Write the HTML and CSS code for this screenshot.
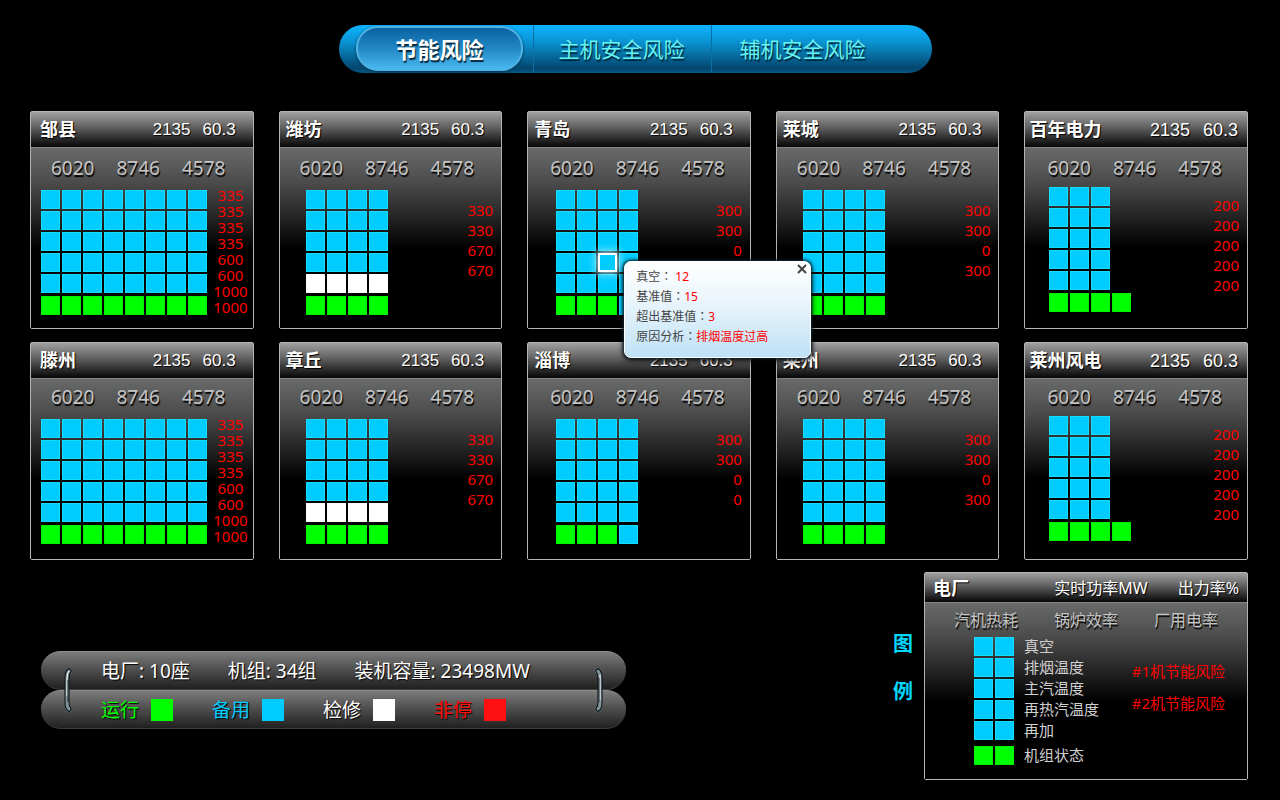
FILE: index.html
```html
<!DOCTYPE html>
<html lang="zh-CN">
<head>
    <meta charset="UTF-8">
    <meta name="viewport" content="width=device-width, initial-scale=1.0">
    <title>节能风险</title>
    <link rel="stylesheet" href="styles.css">
</head>
<body>
    <!-- 顶部切换 -->
    <nav class="tab-bar">
        <div class="tabs">
            <div class="tab-slot"><button type="button" class="tab active">节能风险</button></div>
            <div class="tab-slot"><button type="button" class="tab">主机安全风险</button></div>
            <div class="tab-slot last"><button type="button" class="tab">辅机安全风险</button></div>
        </div>
    </nav>

    <!-- 各电厂卡片，由 plants.js 生成 -->
    <main class="plants" id="plants"></main>

    <div class="bottom">
        <!-- 汇总和状态颜色 -->
        <section class="summary">
            <div class="bar">
                <span>电厂: 10座</span>
                <span>机组: 34组</span>
                <span>装机容量: 23498MW</span>
            </div>
            <div class="bar states">
                <span class="state run">运行<i class="swatch"></i></span>
                <span class="state standby">备用<i class="swatch"></i></span>
                <span class="state repair">检修<i class="swatch"></i></span>
                <span class="state outage">非停<i class="swatch"></i></span>
            </div>
            <svg class="clip clip-left" viewBox="0 0 14 48" width="14" height="48">
                <circle cx="8" cy="5" r="3" fill="#111" stroke="#56666a"/>
                <circle cx="8" cy="43" r="3" fill="#111" stroke="#56666a"/>
                <path d="M8 5Q6 7 6 12V36Q6 41 8 43" fill="none" stroke="#0b1113" stroke-width="5" stroke-linecap="round"/>
                <path d="M8 5Q6 7 6 12V36Q6 41 8 43" fill="none" stroke="#7e9298" stroke-width="3" stroke-linecap="round"/>
                <path d="M8 5Q6 7 6 12V30" fill="none" stroke="#fff" stroke-width="1" stroke-linecap="round"/>
                <path d="M7 14V36" fill="none" stroke="#20282b" stroke-width="1"/>
            </svg>
            <svg class="clip clip-right" viewBox="0 0 14 48" width="14" height="48">
                <circle cx="6" cy="5" r="3" fill="#111" stroke="#56666a"/>
                <circle cx="6" cy="43" r="3" fill="#111" stroke="#56666a"/>
                <path d="M6 5Q8 7 8 12V36Q8 41 6 43" fill="none" stroke="#0b1113" stroke-width="5" stroke-linecap="round"/>
                <path d="M6 5Q8 7 8 12V36Q8 41 6 43" fill="none" stroke="#7e9298" stroke-width="3" stroke-linecap="round"/>
                <path d="M8 9V34" fill="none" stroke="#fff" stroke-width="1" stroke-linecap="round"/>
                <path d="M7 12V36" fill="none" stroke="#20282b" stroke-width="1"/>
            </svg>
        </section>

        <!-- 图例 -->
        <section class="legend">
            <h2 class="legend-title"><span>图</span><span>例</span></h2>
            <div class="card legend-card">
                <div class="card-head">
                    <h3 class="name">电厂</h3>
                    <span class="power">实时功率MW</span>
                    <span>出力率%</span>
                </div>
                <div class="card-body">
                    <div class="rates">
                        <span>汽机热耗</span>
                        <span>锅炉效率</span>
                        <span>厂用电率</span>
                    </div>
                    <div class="legend-main">
                        <ul class="legend-list">
                            <li><i class="cell"></i><i class="cell"></i>真空</li>
                            <li><i class="cell"></i><i class="cell"></i>排烟温度</li>
                            <li><i class="cell"></i><i class="cell"></i>主汽温度</li>
                            <li><i class="cell"></i><i class="cell"></i>再热汽温度</li>
                            <li><i class="cell"></i><i class="cell"></i>再加</li>
                            <li class="unit"><i class="cell green"></i><i class="cell green"></i>机组状态</li>
                        </ul>
                        <div class="legend-risk">
                            <span>#1机节能风险</span>
                            <span>#2机节能风险</span>
                        </div>
                    </div>
                </div>
            </div>
        </section>
    </div>

    <script src="plants.js"></script>
</body>
</html>
```

FILE: styles.css
```css
* {
    box-sizing: border-box;
}

body {
    margin: 0;
    padding: 25px 32px 20px 30px;
    background-color: #000;
    color: #fff;
    font-family: "Noto Sans", "Noto Sans CJK SC", sans-serif;
}

h2, h3, ul, p {
    margin: 0;
    padding: 0;
}

button {
    font-family: inherit;
    border: none;
    padding: 0;
    background: none;
    cursor: pointer;
}

/* 顶部切换 */
.tab-bar {
    display: flex;
    justify-content: center;
    padding-right: 7px;
    margin-bottom: 38px;
}

.tabs {
    display: flex;
    height: 48px;
    border-radius: 24px;
    background: linear-gradient(#0db4ff, #0a93d3 35%, #04476e 90%, #075a8a);
}

.tab-slot {
    display: flex;
    padding: 1px 10px 2px 17px;
    border-right: 1px solid #0b6fa5;
}

.tab-slot + .tab-slot {
    padding: 1px 26px 2px 25px;
}

.tab-slot.last {
    padding: 1px 66px 2px 28px;
    border-right: none;
}

.tab {
    color: #66f3f0;
    font-size: 21px;
    line-height: 24px;
    text-shadow: 1px 2px 1px #00263c;
}

.tab.active {
    padding: 0 37px;
    border-radius: 22px;
    border: 2px solid #4fb2e4;
    background: linear-gradient(#0b62a3, #2287c4 50%, #48b8f0);
    color: #fff;
    font-size: 22px;
    font-weight: 700;
    box-shadow: 0 1px 3px #00304e;
}

/* 电厂卡片 */
.plants {
    display: grid;
    grid-template-columns: repeat(5, 1fr);
    gap: 13px 25px;
}

.card {
    border: 1px solid #b4b4b4;
    border-radius: 2px;
}

.card-head {
    display: flex;
    align-items: center;
    gap: 12px;
    height: 35px;
    padding: 0 17px 0 6px;
    background: linear-gradient(#a0a0a0, #666 40%, #060606);
    font-family: "Liberation Sans", "Noto Sans CJK SC", sans-serif;
    font-size: 17px;
    line-height: 24px;
    text-shadow: 1px 1px 1px #000;
}

.name {
    margin-right: auto;
    font-size: 18px;
    font-weight: 700;
}

.card-body {
    border-top: 1px solid #858585;
    padding: 8px 8px 12px 26px;
    background: linear-gradient(#686a69, #4a4a4a 20%, #000 56%);
}

.rates {
    display: flex;
    gap: 22px;
    margin-left: -6px;
    margin-bottom: 10px;
    color: #c4c4c4;
    font-size: 19px;
    line-height: 24px;
    text-shadow: 1px 2px 1px #000;
}

.chart {
    display: flex;
    justify-content: space-between;
}

.row {
    display: flex;
    gap: 2px;
    margin-bottom: 2px;
}

.row.status {
    margin-top: 3px;
    margin-bottom: 1px;
}

.cell {
    display: block;
    width: 19px;
    height: 19px;
    background-color: #00ccff;
    border: 1px solid #12dcff;
}

.cell.green {
    background-color: #00ff00;
    border-color: #00f000;
}

.cell.white {
    background-color: #fff;
    border-color: #fff;
}

.cell-wrap {
    position: relative;
}

.cell.selected {
    border: 2px solid #fff;
    box-shadow: 0 0 8px 2px #9eeaff;
}

.outputs {
    margin-top: 10px;
    color: #ff0000;
    font-size: 15px;
    line-height: 20px;
    text-align: right;
}

/* 第三列稍微靠右 */
.plants .card:nth-child(5n+3) .card-body {
    padding-left: 28px;
}

/* 八台机组的电厂 */
.wide .card-head {
    padding-left: 9px;
}

.wide .card-body {
    padding-left: 10px;
    padding-right: 5px;
}

.wide .rates {
    margin-left: 10px;
}

.wide .outputs {
    margin-top: -3px;
    line-height: 16px;
    text-align: center;
}

/* 名称较长的电厂 */
.long .card-head {
    gap: 13px;
    padding: 0 9px 0 4px;
    font-size: 18px;
}

.long .card-body {
    padding-left: 24px;
}

.long .rates {
    margin-left: -2px;
    margin-bottom: 7px;
}

.long .outputs {
    margin-top: 8px;
}

/* 第二排内容更紧凑 */
.plants .card:nth-child(n+6) .card-body {
    padding-top: 6px;
    padding-bottom: 14px;
}

/* 风险提示框 */
.popup {
    position: absolute;
    z-index: 10;
    top: 8px;
    left: 26px;
    width: 187px;
    padding: 5px 11px 10px;
    border: 1px solid #fff;
    border-radius: 7px;
    background: linear-gradient(#fff, #eef7fc 35%, #bfe1f6);
    box-shadow: 0 0 3px 1px #10242e, 0 2px 6px #000;
    color: #444;
    font-size: 12px;
    line-height: 20px;
}

.popup p {
    height: 20px;
}

.popup b {
    color: #ff0000;
    font-weight: normal;
}

/* 冒号居中显示 */
.colon {
    font-family: "Noto Sans CJK TC", sans-serif;
    line-height: 12px;
}

.popup-close {
    position: absolute;
    top: 1px;
    right: 2px;
    width: 12px;
    height: 12px;
}

.popup-close svg {
    display: block;
    margin: 1px;
}

/* 底部 */
.bottom {
    display: flex;
    justify-content: space-between;
    align-items: flex-start;
    margin-top: 12px;
}

.summary {
    position: relative;
    width: 48%;
    margin: 79px 0 0 11px;
}

.bar {
    display: flex;
    align-items: center;
    gap: 38px;
    height: 39px;
    padding-left: 60px;
    border-radius: 20px;
    border-top: 1px solid #8a8a8a;
    border-bottom: 1px solid #3c3c3c;
    background: linear-gradient(#7c7c7c, #555 40%, #202020);
    font-size: 19px;
    line-height: 24px;
    white-space: nowrap;
    text-shadow: 1px 1px 1px #000;
}

.states {
    gap: 39px;
}

.state {
    display: flex;
    align-items: center;
    gap: 12px;
}

.swatch {
    width: 22px;
    height: 22px;
    background-color: currentColor;
}

.run { color: #00ff00; }
.standby { color: #00ccff; }
.repair { color: #fff; }
.outage { color: #ff1010; }

.clip {
    position: absolute;
    top: 15px;
}

.clip-left {
    left: 20px;
}

.clip-right {
    right: 20px;
}

/* 图例 */
.legend {
    display: flex;
    align-items: flex-start;
    gap: 11px;
}

.legend-title {
    display: flex;
    flex-direction: column;
    gap: 24px;
    margin-top: 60px;
    color: #00d8ff;
    font-size: 20px;
    font-weight: 700;
    line-height: 24px;
}

.legend-card {
    width: 324px;
}

.legend-card .card-head {
    gap: 30px;
    height: 29px;
    padding: 0 8px;
    font-family: inherit;
    font-size: 16px;
}

.legend-card .card-body {
    padding: 5px 22px 14px 49px;
}

.legend-card .rates {
    gap: 36px;
    margin: 0 0 5px -20px;
    font-size: 16px;
}

.legend-main {
    display: flex;
    justify-content: space-between;
}

.legend-list {
    list-style: none;
    color: #d0d0d0;
    font-size: 15px;
    line-height: 19px;
}

.legend-list li {
    display: flex;
    gap: 2px;
    margin-bottom: 2px;
}

.legend-list .cell + .cell {
    margin-right: 8px;
}

.legend-list .unit {
    margin: 6px 0 0;
}

.legend-risk {
    display: flex;
    flex-direction: column;
    gap: 8px;
    margin-top: 22px;
    color: #ff0000;
    font-size: 15px;
    line-height: 24px;
}
```

FILE: plants.js
```js
// b = 备用, g = 运行, w = 检修, s = 选中
const plants = [
    { name: '邹县', type: 'wide', rows: ['bbbbbbbb', 'bbbbbbbb', 'bbbbbbbb', 'bbbbbbbb', 'bbbbbbbb', 'gggggggg'], outputs: [335, 335, 335, 335, 600, 600, 1000, 1000] },
    { name: '潍坊', rows: ['bbbb', 'bbbb', 'bbbb', 'bbbb', 'wwww', 'gggg'], outputs: [330, 330, 670, 670] },
    { name: '青岛', rows: ['bbbb', 'bbbb', 'bbbb', 'bbsb', 'bbbb', 'gggb'], outputs: [300, 300, 0, 0] },
    { name: '莱城', rows: ['bbbb', 'bbbb', 'bbbb', 'bbbb', 'bbbb', 'gggg'], outputs: [300, 300, 0, 300] },
    { name: '百年电力', type: 'long', rows: ['bbb', 'bbb', 'bbb', 'bbb', 'bbb', 'gggg'], outputs: [200, 200, 200, 200, 200] },
    { name: '滕州', type: 'wide', rows: ['bbbbbbbb', 'bbbbbbbb', 'bbbbbbbb', 'bbbbbbbb', 'bbbbbbbb', 'gggggggg'], outputs: [335, 335, 335, 335, 600, 600, 1000, 1000] },
    { name: '章丘', rows: ['bbbb', 'bbbb', 'bbbb', 'bbbb', 'wwww', 'gggg'], outputs: [330, 330, 670, 670] },
    { name: '淄博', rows: ['bbbb', 'bbbb', 'bbbb', 'bbbb', 'bbbb', 'gggb'], outputs: [300, 300, 0, 0] },
    { name: '莱州', rows: ['bbbb', 'bbbb', 'bbbb', 'bbbb', 'bbbb', 'gggg'], outputs: [300, 300, 0, 300] },
    { name: '莱州风电', type: 'long', rows: ['bbb', 'bbb', 'bbb', 'bbb', 'bbb', 'gggg'], outputs: [200, 200, 200, 200, 200] }
];

const colon = '<span class="colon" lang="zh-TW">：</span>';

const popup = `
    <div class="popup" id="popup">
        <p>真空${colon} <b>12</b></p>
        <p>基准值${colon}<b>15</b></p>
        <p>超出基准值${colon}<b>3</b></p>
        <p>原因分析${colon}<b>排烟温度过高</b></p>
        <button type="button" class="popup-close" aria-label="关闭">
            <svg viewBox="0 0 10 10" width="10" height="10"><path d="M1 1L9 9M9 1L1 9" stroke="#444" stroke-width="2"/></svg>
        </button>
    </div>`;

function cellHtml(c) {
    if (c === 's') {
        return `<div class="cell-wrap"><i class="cell selected"></i>${popup}</div>`;
    }
    const color = { b: '', g: 'green', w: 'white' }[c];
    return `<i class="cell ${color}"></i>`;
}

function plantHtml(p) {
    const rows = p.rows.map((r, i) =>
        `<div class="row ${i === 5 ? 'status' : ''}">${[...r].map(cellHtml).join('')}</div>`
    ).join('');
    return `
        <section class="card ${p.type || ''}">
            <div class="card-head">
                <h2 class="name">${p.name}</h2>
                <span>2135</span>
                <span>60.3</span>
            </div>
            <div class="card-body">
                <div class="rates"><span>6020</span><span>8746</span><span>4578</span></div>
                <div class="chart">
                    <div>${rows}</div>
                    <div class="outputs">${p.outputs.map(o => `<p>${o}</p>`).join('')}</div>
                </div>
            </div>
        </section>`;
}

document.getElementById('plants').innerHTML = plants.map(plantHtml).join('');

// 关闭提示框
document.querySelector('.popup-close').addEventListener('click', () => {
    document.getElementById('popup').style.display = 'none';
});
```
